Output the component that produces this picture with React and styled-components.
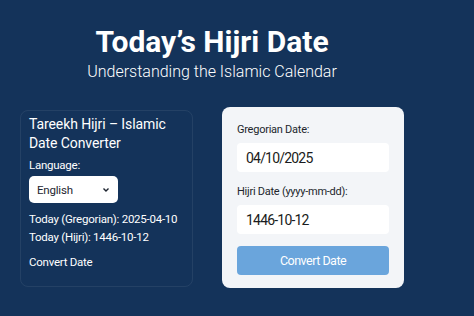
import React from "react";
import styled, { createGlobalStyle } from "styled-components";

const Global = createGlobalStyle`
  html, body {
    margin: 0;
    padding: 0;
    background: #14335a;
  }
  body {
    font-family: Roboto, "Liberation Sans", sans-serif;
    color: #fff;
  }
`;

const Page = styled.div`
  width: 384px;
  height: 316px;
  margin-left: 20px;
  padding-top: 25px;
  box-sizing: border-box;
  overflow: hidden;
`;

const Header = styled.header`
  text-align: center;
`;

const Title = styled.h1`
  margin: 0;
  font-size: 30px;
  font-weight: 700;
  line-height: 34px;
`;

const Subtitle = styled.p`
  margin: 3px 0 0;
  font-size: 16px;
  line-height: 20px;
  font-weight: 300;
`;

const Columns = styled.div`
  display: flex;
  justify-content: space-between;
  align-items: flex-start;
  margin-top: 25px;
`;

const InfoCard = styled.section`
  width: 173px;
  height: 177px;
  margin-top: 3px;
  box-sizing: border-box;
  padding: 4px 8px;
  border: 1px solid rgba(255, 255, 255, 0.07);
  border-radius: 8px;
`;

const CardTitle = styled.h2`
  margin: 0;
  font-size: 14px;
  font-weight: 400;
  line-height: 18.5px;
  letter-spacing: -0.1px;
`;

const Label = styled.div`
  margin-top: ${(p) => p.$top || 0}px;
  font-size: ${(p) => (p.$dark ? 11 : 11.5)}px;
  line-height: 14px;
  letter-spacing: -0.25px;
  color: ${(p) => (p.$dark ? "#22262c" : "#fff")};
`;

const SelectBox = styled.div`
  margin-top: 4px;
  width: 89px;
  height: 27px;
  box-sizing: border-box;
  padding: 0 8px;
  background: #fff;
  border-radius: 5px;
  color: #1d2530;
  font-size: 11.5px;
  letter-spacing: -0.2px;
  display: flex;
  align-items: center;
  justify-content: space-between;
`;

const Line = styled.div`
  font-size: 11.5px;
  line-height: 18px;
  letter-spacing: -0.25px;
  white-space: nowrap;
  margin-top: ${(p) => p.$top || 0}px;
`;

const FormCard = styled.section`
  width: 182px;
  height: 181px;
  box-sizing: border-box;
  padding: 16px 15px;
  background: #f3f5f8;
  border-radius: 8px;
  display: flex;
  flex-direction: column;
`;

const Field = styled.div`
  margin-top: 6px;
  height: 29px;
  flex-shrink: 0;
  background: #fff;
  border-radius: 4px;
  box-sizing: border-box;
  padding: 0 9px;
  display: flex;
  align-items: center;
  font-size: 14px;
  letter-spacing: -0.8px;
  color: #1a1c20;
`;

const Button = styled.button`
  margin-top: 12px;
  height: 29px;
  flex-shrink: 0;
  border: none;
  border-radius: 4px;
  background: #6aa5dc;
  color: #fff;
  font-family: inherit;
  font-size: 12.5px;
  letter-spacing: -0.5px;
`;

const Chevron = () => (
  <svg width="8" height="6" viewBox="0 0 8 6">
    <path d="M1.5 1.5 L4 4 L6.5 1.5" fill="none" stroke="#1d2530" strokeWidth="1.4" />
  </svg>
);

export default function App() {
  return (
    <Page>
      <Global />
      <Header>
        <Title>Today’s Hijri Date</Title>
        <Subtitle>Understanding the Islamic Calendar</Subtitle>
      </Header>
      <Columns>
        <InfoCard>
          <CardTitle>
            Tareekh Hijri – Islamic
            <br />
            Date Converter
          </CardTitle>
          <Label $top={6}>Language:</Label>
          <SelectBox>
            <span>English</span>
            <Chevron />
          </SelectBox>
          <Line $top={7}>Today (Gregorian): 2025-04-10</Line>
          <Line>Today (Hijri): 1446-10-12</Line>
          <Line $top={7}>Convert Date</Line>
        </InfoCard>
        <FormCard>
          <Label $dark>Gregorian Date:</Label>
          <Field>04/10/2025</Field>
          <Label $dark $top={13}>Hijri Date (yyyy-mm-dd):</Label>
          <Field>1446-10-12</Field>
          <Button>Convert Date</Button>
        </FormCard>
      </Columns>
    </Page>
  );
}
